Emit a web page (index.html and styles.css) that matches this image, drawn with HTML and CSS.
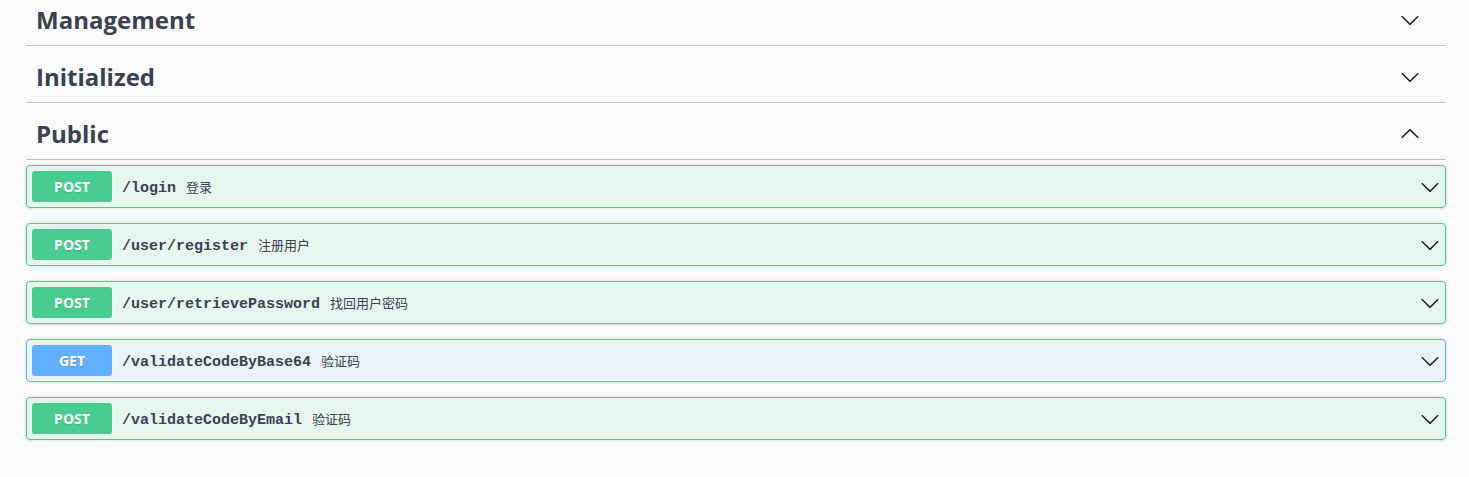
FILE: index.html
```html
<!DOCTYPE html>
<html lang="zh">
<head>
<meta charset="utf-8">
<title>Swagger</title>
<link rel="stylesheet" href="styles.css">
</head>
<body>
<div class="wrapper">
  <section class="tag-section">
    <h3 class="tag"><span>Management</span>
      <svg class="arrow" width="20" height="20" viewBox="0 0 20 20"><path d="M17.418 6.109c.272-.268.709-.268.979 0s.271.701 0 .969l-7.908 7.83c-.27.268-.707.268-.979 0l-7.908-7.83c-.27-.268-.27-.701 0-.969.271-.268.709-.268.979 0L10 13.25l7.418-7.141z"/></svg>
    </h3>
  </section>
  <section class="tag-section">
    <h3 class="tag"><span>Initialized</span>
      <svg class="arrow" width="20" height="20" viewBox="0 0 20 20"><path d="M17.418 6.109c.272-.268.709-.268.979 0s.271.701 0 .969l-7.908 7.83c-.27.268-.707.268-.979 0l-7.908-7.830c-.27-.268-.27-.701 0-.969.271-.268.709-.268.979 0L10 13.25l7.418-7.141z"/></svg>
    </h3>
  </section>
  <section class="tag-section">
    <h3 class="tag"><span>Public</span>
      <svg class="arrow" width="20" height="20" viewBox="0 0 20 20"><path d="M2.582 13.891c-.272.268-.709.268-.979 0s-.271-.701 0-.969l7.908-7.83c.27-.268.707-.268.979 0l7.908 7.83c.27.268.27.701 0 .969-.271.268-.709.268-.979 0L10 6.75l-7.418 7.141z"/></svg>
    </h3>
    <div class="ops">
      <div class="op post">
        <span class="method">POST</span>
        <span class="path">/login</span>
        <span class="desc">登录</span>
        <svg class="op-arrow" width="20" height="20" viewBox="0 0 20 20"><path d="M17.418 6.109c.272-.268.709-.268.979 0s.271.701 0 .969l-7.908 7.83c-.27.268-.707.268-.979 0l-7.908-7.83c-.27-.268-.27-.701 0-.969.271-.268.709-.268.979 0L10 13.25l7.418-7.141z"/></svg>
      </div>
      <div class="op post">
        <span class="method">POST</span>
        <span class="path">/user/register</span>
        <span class="desc">注册用户</span>
        <svg class="op-arrow" width="20" height="20" viewBox="0 0 20 20"><path d="M17.418 6.109c.272-.268.709-.268.979 0s.271.701 0 .969l-7.908 7.83c-.27.268-.707.268-.979 0l-7.908-7.83c-.27-.268-.27-.701 0-.969.271-.268.709-.268.979 0L10 13.25l7.418-7.141z"/></svg>
      </div>
      <div class="op post">
        <span class="method">POST</span>
        <span class="path">/user/retrievePassword</span>
        <span class="desc">找回用户密码</span>
        <svg class="op-arrow" width="20" height="20" viewBox="0 0 20 20"><path d="M17.418 6.109c.272-.268.709-.268.979 0s.271.701 0 .969l-7.908 7.83c-.27.268-.707.268-.979 0l-7.908-7.83c-.27-.268-.27-.701 0-.969.271-.268.709-.268.979 0L10 13.25l7.418-7.141z"/></svg>
      </div>
      <div class="op get">
        <span class="method">GET</span>
        <span class="path">/validateCodeByBase64</span>
        <span class="desc">验证码</span>
        <svg class="op-arrow" width="20" height="20" viewBox="0 0 20 20"><path d="M17.418 6.109c.272-.268.709-.268.979 0s.271.701 0 .969l-7.908 7.83c-.27.268-.707.268-.979 0l-7.908-7.83c-.27-.268-.27-.701 0-.969.271-.268.709-.268.979 0L10 13.25l7.418-7.141z"/></svg>
      </div>
      <div class="op post">
        <span class="method">POST</span>
        <span class="path">/validateCodeByEmail</span>
        <span class="desc">验证码</span>
        <svg class="op-arrow" width="20" height="20" viewBox="0 0 20 20"><path d="M17.418 6.109c.272-.268.709-.268.979 0s.271.701 0 .969l-7.908 7.83c-.27.268-.707.268-.979 0l-7.908-7.83c-.27-.268-.27-.701 0-.969.271-.268.709-.268.979 0L10 13.25l7.418-7.141z"/></svg>
      </div>
    </div>
  </section>
</div>
</body>
</html>
```

FILE: styles.css
```css
html, body {
  margin: 0;
  padding: 0;
  background: #fafafa;
}

.wrapper {
  margin-top: -6px;
  padding: 0 23px 0 26px;
  font-family: "Open Sans", "Noto Sans", "Noto Sans CJK SC", sans-serif;
  color: #3b4151;
}

.tag {
  display: flex;
  align-items: center;
  justify-content: space-between;
  box-sizing: border-box;
  height: 52px;
  margin: 0 0 5px;
  padding: 0 26px 0 10px;
  border-bottom: 1px solid rgba(59, 65, 81, 0.3);
  font-size: 24px;
  font-weight: 700;
  color: #3b4151;
}

.arrow {
  fill: #222;
}

.op {
  display: flex;
  align-items: center;
  box-sizing: border-box;
  height: 43px;
  margin: 0 0 15px;
  padding: 5px;
  border: 1px solid #49cc90;
  border-radius: 4px;
  background: rgba(73, 204, 144, 0.1);
  box-shadow: 0 0 3px rgba(0, 0, 0, 0.19);
}

.op.get {
  border-color: #61affe;
  background: rgba(97, 175, 254, 0.1);
}

.method {
  box-sizing: border-box;
  width: 80px;
  height: 31px;
  line-height: 31px;
  text-align: center;
  border-radius: 3px;
  background: #49cc90;
  color: #fff;
  font-size: 14px;
  font-weight: 700;
  text-shadow: 0 1px 0 rgba(0, 0, 0, 0.1);
}

.op.get .method {
  background: #61affe;
}

.path {
  padding: 3px 10px 0;
  font-family: "Liberation Mono", "DejaVu Sans Mono", monospace;
  font-size: 15px;
  font-weight: 700;
  color: #3b4151;
}

.desc {
  flex: 1;
  font-family: "Noto Sans CJK SC", sans-serif;
  font-size: 13px;
  color: #3b4151;
}

.op-arrow {
  fill: #222;
}
```
